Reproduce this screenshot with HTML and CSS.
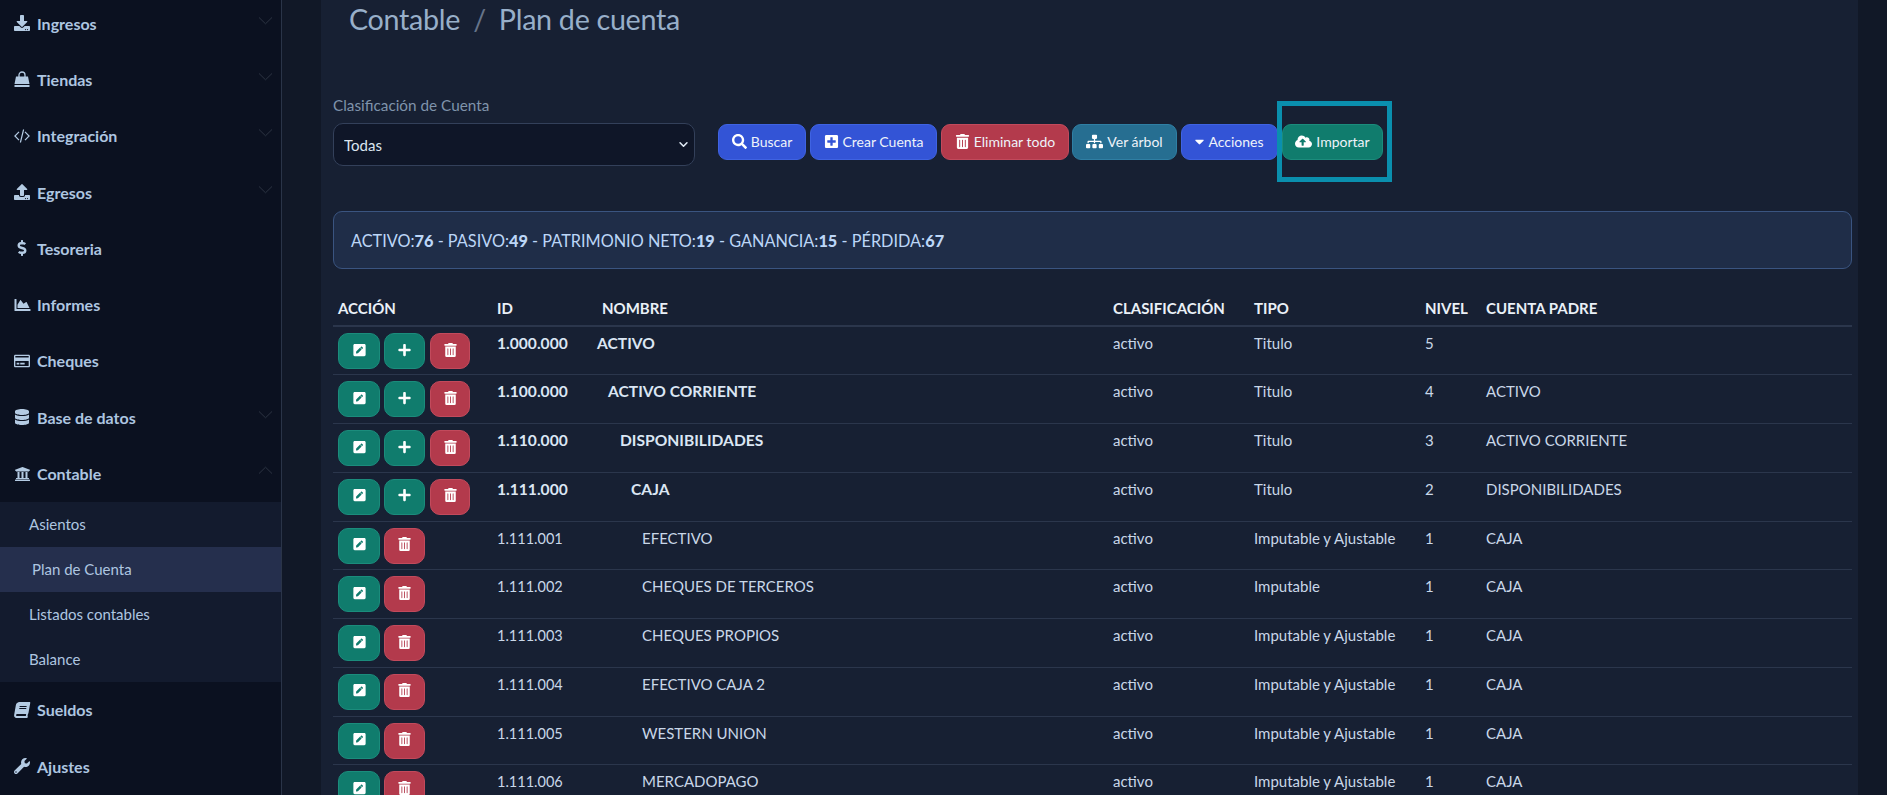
FILE: index.html
```html
<!DOCTYPE html>
<html lang="es">
<head>
    <meta charset="UTF-8">
    <meta name="viewport" content="width=device-width, initial-scale=1.0">
    <title>Contable - Plan de cuenta</title>
    <link rel="stylesheet" href="styles.css">
</head>
<body>
    <svg class="icon-defs" xmlns="http://www.w3.org/2000/svg">
        <symbol id="i-download" viewBox="0 0 512 512"><path d="M216 0h80c13.3 0 24 10.7 24 24v168h87.7c17.8 0 26.7 21.5 14.1 34.1L269.7 378.3c-7.5 7.5-19.8 7.5-27.3 0L90.1 226.1c-12.6-12.6-3.7-34.1 14.1-34.1H192V24c0-13.3 10.7-24 24-24zm296 376v112c0 13.3-10.7 24-24 24H24c-13.3 0-24-10.7-24-24V376c0-13.3 10.7-24 24-24h146.7l49 49c20.1 20.1 52.5 20.1 72.6 0l49-49H488c13.3 0 24 10.7 24 24zm-124 88c0-11-9-20-20-20s-20 9-20 20 9 20 20 20 20-9 20-20zm64 0c0-11-9-20-20-20s-20 9-20 20 9 20 20 20 20-9 20-20z"/></symbol>
        <symbol id="i-upload" viewBox="0 0 512 512"><path d="M296 384h-80c-13.3 0-24-10.7-24-24V192h-87.7c-17.8 0-26.7-21.5-14.1-34.1L242.3 5.7c7.5-7.5 19.8-7.5 27.3 0l152.2 152.2c12.6 12.6 3.7 34.1-14.1 34.1H320v168c0 13.3-10.7 24-24 24zm216-8v112c0 13.3-10.7 24-24 24H24c-13.3 0-24-10.7-24-24V376c0-13.3 10.7-24 24-24h136v8c0 30.9 25.1 56 56 56h80c30.9 0 56-25.1 56-56v-8h136c13.3 0 24 10.7 24 24zm-124 88c0-11-9-20-20-20s-20 9-20 20 9 20 20 20 20-9 20-20zm64 0c0-11-9-20-20-20s-20 9-20 20 9 20 20 20 20-9 20-20z"/></symbol>
        <symbol id="i-bag" viewBox="0 0 16 16"><path fill="none" stroke="currentColor" stroke-width="1.3" d="M5 7V4a3 3 0 0 1 6 0v3"/><path d="M2 5.5h12l1.5 7.5H.5zM.5 14h15v2H.5z"/></symbol>
        <symbol id="i-code" viewBox="0 0 16 16"><path fill="none" stroke="currentColor" stroke-width="1.2" d="M5 3.8.9 8 5 12.2M11 3.8 15.1 8 11 12.2M9.6 1.5 6.4 14.5"/></symbol>
        <symbol id="i-dollar" viewBox="0 0 288 512"><path d="M209.2 233.4l-108-31.6C88.7 198.2 80 186.5 80 173.5c0-16.3 13.2-29.5 29.5-29.5h66.3c12.2 0 24.2 3.7 34.2 10.5 6.1 4.1 14.3 3.1 19.5-2l34.8-34c7.1-6.9 6.1-18.4-1.8-24.5C238 74.8 207.4 64.1 176 64V16c0-8.8-7.2-16-16-16h-32c-8.8 0-16 7.2-16 16v48h-2.5C45.8 64-5.4 118.7.5 183.6c4.2 46.1 39.4 83.6 83.8 96.6l102.5 30c12.5 3.7 21.2 15.3 21.2 28.3 0 16.3-13.2 29.5-29.5 29.5h-66.3C100 368 88 364.3 78 357.5c-6.1-4.1-14.3-3.1-19.5 2l-34.8 34c-7.1 6.9-6.1 18.4 1.8 24.5 24.5 19.2 55.1 29.9 86.5 30v48c0 8.8 7.2 16 16 16h32c8.8 0 16-7.2 16-16v-48.2c46.6-.9 90.3-28.6 105.7-72.7 21.5-61.6-14.6-124.8-72.5-141.7z"/></symbol>
        <symbol id="i-chart" viewBox="0 0 512 512"><path d="M500 384c6.6 0 12 5.4 12 12v40c0 6.6-5.4 12-12 12H12c-6.6 0-12-5.4-12-12V76c0-6.6 5.4-12 12-12h40c6.6 0 12 5.4 12 12v308h436zM372.7 159.5L288 216l-85.3-113.7c-5.1-6.8-15.5-6.3-19.9 1L96 248v104h384l-89.9-187.8c-3.2-6.5-11.4-8.7-17.4-4.7z"/></symbol>
        <symbol id="i-card" viewBox="0 0 576 512"><path d="M527.9 32H48.1C21.5 32 0 53.5 0 80v352c0 26.5 21.5 48 48.1 48h479.8c26.6 0 48.1-21.5 48.1-48V80c0-26.5-21.5-48-48.1-48zM54.1 80h467.8c3.3 0 6 2.7 6 6v42H48.1v-42c0-3.3 2.7-6 6-6zm467.8 352H54.1c-3.3 0-6-2.7-6-6V256h479.8v170c0 3.3-2.7 6-6 6zM192 332v40c0 6.6-5.4 12-12 12h-72c-6.6 0-12-5.4-12-12v-40c0-6.6 5.4-12 12-12h72c6.6 0 12 5.4 12 12zm192 0v40c0 6.6-5.4 12-12 12H236c-6.6 0-12-5.4-12-12v-40c0-6.6 5.4-12 12-12h136c6.6 0 12 5.4 12 12z"/></symbol>
        <symbol id="i-database" viewBox="0 0 448 512"><path d="M448 73.143v45.714C448 159.143 347.667 192 224 192S0 159.143 0 118.857V73.143C0 32.857 100.333 0 224 0s224 32.857 224 73.143zM448 176v102.857C448 319.143 347.667 352 224 352S0 319.143 0 278.857V176c48.125 33.143 136.208 48.572 224 48.572S399.874 209.143 448 176zm0 160v102.857C448 479.143 347.667 512 224 512S0 479.143 0 438.857V336c48.125 33.143 136.208 48.572 224 48.572S399.874 369.143 448 336z"/></symbol>
        <symbol id="i-bank" viewBox="0 0 512 512"><path d="M496 128v16a8 8 0 0 1-8 8h-24v12c0 6.627-5.373 12-12 12H60c-6.627 0-12-5.373-12-12v-12H24a8 8 0 0 1-8-8v-16a8 8 0 0 1 4.941-7.392l232-88a7.996 7.996 0 0 1 6.118 0l232 88A8 8 0 0 1 496 128zm-24 304H40c-13.255 0-24 10.745-24 24v16a8 8 0 0 0 8 8h464a8 8 0 0 0 8-8v-16c0-13.255-10.745-24-24-24zM96 192v192H60c-6.627 0-12 5.373-12 12v20h416v-20c0-6.627-5.373-12-12-12h-36V192h-64v192h-64V192h-64v192h-64V192H96z"/></symbol>
        <symbol id="i-book" viewBox="0 0 448 512"><path d="M448 360V24c0-13.3-10.7-24-24-24H96C43 0 0 43 0 96v320c0 53 43 96 96 96h328c13.3 0 24-10.7 24-24v-16c0-7.5-3.5-14.3-8.9-18.7-4.2-15.4-4.2-59.3 0-74.7 5.4-4.3 8.9-11.1 8.9-18.6zM128 134c0-3.3 2.7-6 6-6h212c3.3 0 6 2.7 6 6v20c0 3.3-2.7 6-6 6H134c-3.3 0-6-2.7-6-6v-20zm0 64c0-3.3 2.7-6 6-6h212c3.3 0 6 2.7 6 6v20c0 3.3-2.7 6-6 6H134c-3.3 0-6-2.7-6-6v-20zm253.4 250H96c-17.7 0-32-14.3-32-32 0-17.6 14.4-32 32-32h285.4c-1.9 17.1-1.9 46.9 0 64z"/></symbol>
        <symbol id="i-wrench" viewBox="0 0 512 512"><path d="M507.73 109.1c-2.24-9.03-13.54-12.09-20.12-5.51l-74.36 74.36-67.88-11.31-11.31-67.88 74.36-74.36c6.62-6.62 3.43-17.9-5.66-20.16-47.38-11.74-99.55.91-136.58 37.93-39.64 39.64-50.55 97.1-34.05 147.2L18.74 402.76c-24.99 24.99-24.99 65.51 0 90.5 24.99 24.99 65.51 24.99 90.5 0l213.21-213.21c50.12 16.71 107.47 5.68 147.37-34.22 37.07-37.07 49.7-89.32 37.91-136.73zM64 472c-13.25 0-24-10.75-24-24 0-13.26 10.75-24 24-24s24 10.74 24 24c0 13.25-10.75 24-24 24z"/></symbol>
        <symbol id="i-chevron" viewBox="0 0 16 9"><path fill="none" stroke="currentColor" stroke-width="1" d="M1 1.2 8 8l7-6.8"/></symbol>
        <symbol id="i-search" viewBox="0 0 512 512"><path d="M505 442.7L405.3 343c-4.5-4.5-10.6-7-17-7H372c27.6-35.3 44-79.7 44-128C416 93.1 322.9 0 208 0S0 93.1 0 208s93.1 208 208 208c48.3 0 92.7-16.4 128-44v16.3c0 6.4 2.5 12.5 7 17l99.7 99.7c9.4 9.4 24.6 9.4 33.9 0l28.3-28.3c9.4-9.4 9.4-24.6.1-34zM208 336c-70.7 0-128-57.2-128-128 0-70.7 57.2-128 128-128 70.7 0 128 57.2 128 128 0 70.7-57.2 128-128 128z"/></symbol>
        <symbol id="i-plus-square" viewBox="0 0 448 512"><path d="M400 32H48C21.5 32 0 53.5 0 80v352c0 26.5 21.5 48 48 48h352c26.5 0 48-21.5 48-48V80c0-26.5-21.5-48-48-48zm-32 252c0 6.6-5.4 12-12 12h-92v92c0 6.6-5.4 12-12 12h-56c-6.6 0-12-5.4-12-12v-92H92c-6.6 0-12-5.4-12-12v-56c0-6.6 5.4-12 12-12h92v-92c0-6.6 5.4-12 12-12h56c6.6 0 12 5.4 12 12v92h92c6.6 0 12 5.4 12 12v56z"/></symbol>
        <symbol id="i-plus" viewBox="0 0 448 512"><path d="M416 208H272V64c0-17.67-14.33-32-32-32h-32c-17.67 0-32 14.33-32 32v144H32c-17.67 0-32 14.33-32 32v32c0 17.67 14.33 32 32 32h144v144c0 17.67 14.33 32 32 32h32c17.67 0 32-14.33 32-32V304h144c17.67 0 32-14.33 32-32v-32c0-17.67-14.33-32-32-32z"/></symbol>
        <symbol id="i-trash" viewBox="0 0 448 512"><path d="M32 464a48 48 0 0 0 48 48h288a48 48 0 0 0 48-48V128H32zm272-256a16 16 0 0 1 32 0v224a16 16 0 0 1-32 0zm-96 0a16 16 0 0 1 32 0v224a16 16 0 0 1-32 0zm-96 0a16 16 0 0 1 32 0v224a16 16 0 0 1-32 0zM432 32H312l-9.4-18.7A24 24 0 0 0 281.1 0H166.8a23.72 23.72 0 0 0-21.4 13.3L136 32H16A16 16 0 0 0 0 48v32a16 16 0 0 0 16 16h416a16 16 0 0 0 16-16V48a16 16 0 0 0-16-16z"/></symbol>
        <symbol id="i-edit" viewBox="0 0 448 512"><path d="M400 480H48c-26.5 0-48-21.5-48-48V80c0-26.5 21.5-48 48-48h352c26.5 0 48 21.5 48 48v352c0 26.5-21.5 48-48 48zM238.1 177.9L102.4 313.6l-6.3 57.1c-.8 7.6 5.6 14.1 13.3 13.3l57.1-6.3L302.2 242c2.3-2.3 2.3-6.1 0-8.5L246.7 178c-2.5-2.4-6.3-2.4-8.6-.1zM345 165.1L314.9 135c-9.4-9.4-24.6-9.4-33.9 0l-23.1 23.1c-2.3 2.3-2.3 6.1 0 8.5l55.5 55.5c2.3 2.3 6.1 2.3 8.5 0L345 199c9.3-9.3 9.3-24.5 0-33.9z"/></symbol>
        <symbol id="i-sitemap" viewBox="0 0 640 512"><path d="M128 352H32c-17.67 0-32 14.33-32 32v96c0 17.67 14.33 32 32 32h96c17.67 0 32-14.33 32-32v-96c0-17.67-14.33-32-32-32zm-24-80h192v48h48v-48h192v48h48v-57.59c0-21.17-17.23-38.41-38.41-38.41H344v-64h40c17.67 0 32-14.33 32-32V32c0-17.67-14.33-32-32-32H256c-17.67 0-32 14.33-32 32v96c0 17.67 14.33 32 32 32h40v64H94.41C73.23 224 56 241.23 56 262.41V320h48v-48zm264 80h-96c-17.67 0-32 14.33-32 32v96c0 17.67 14.33 32 32 32h96c17.67 0 32-14.33 32-32v-96c0-17.67-14.33-32-32-32zm240 0h-96c-17.67 0-32 14.33-32 32v96c0 17.67 14.33 32 32 32h96c17.67 0 32-14.33 32-32v-96c0-17.67-14.33-32-32-32z"/></symbol>
        <symbol id="i-caret" viewBox="0 0 320 512"><path d="M31.3 192h257.3c17.8 0 26.7 21.5 14.1 34.1L174.1 354.8c-7.8 7.8-20.5 7.8-28.3 0L17.2 226.1C4.6 213.5 13.5 192 31.3 192z"/></symbol>
        <symbol id="i-cloud" viewBox="0 0 640 512"><path d="M537.6 226.6c4.1-10.7 6.4-22.4 6.4-34.6 0-53-43-96-96-96-19.7 0-38.1 6-53.3 16.2C367 64.2 315.3 32 256 32c-88.4 0-160 71.6-160 160 0 2.7.1 5.4.2 8.1C40.2 219.8 0 273.2 0 336c0 79.5 64.5 144 144 144h368c70.7 0 128-57.3 128-128 0-61.9-44-113.6-102.4-125.4zM393.4 288H328v112c0 8.8-7.2 16-16 16h-48c-8.8 0-16-7.2-16-16V288h-65.4c-14.3 0-21.4-17.2-11.3-27.3l105.4-105.4c6.2-6.2 16.4-6.2 22.6 0l105.4 105.4c10.1 10.1 2.9 27.3-11.3 27.3z"/></symbol>
    </svg>

    <aside class="sidebar">
        <nav class="nav">
            <a class="nav-link"><svg class="nav-icon"><use href="#i-download"/></svg><span>Ingresos</span><svg class="chevron"><use href="#i-chevron"/></svg></a>
            <a class="nav-link"><svg class="nav-icon"><use href="#i-bag"/></svg><span>Tiendas</span><svg class="chevron"><use href="#i-chevron"/></svg></a>
            <a class="nav-link"><svg class="nav-icon"><use href="#i-code"/></svg><span>Integración</span><svg class="chevron"><use href="#i-chevron"/></svg></a>
            <a class="nav-link"><svg class="nav-icon"><use href="#i-upload"/></svg><span>Egresos</span><svg class="chevron"><use href="#i-chevron"/></svg></a>
            <a class="nav-link"><svg class="nav-icon"><use href="#i-dollar"/></svg><span>Tesoreria</span></a>
            <a class="nav-link"><svg class="nav-icon nav-icon-wide"><use href="#i-chart"/></svg><span>Informes</span></a>
            <a class="nav-link"><svg class="nav-icon"><use href="#i-card"/></svg><span>Cheques</span></a>
            <a class="nav-link"><svg class="nav-icon"><use href="#i-database"/></svg><span>Base de datos</span><svg class="chevron"><use href="#i-chevron"/></svg></a>
            <a class="nav-link"><svg class="nav-icon nav-icon-wide"><use href="#i-bank"/></svg><span>Contable</span><svg class="chevron chevron-up"><use href="#i-chevron"/></svg></a>
            <div class="subnav">
                <a class="sub-link">Asientos</a>
                <a class="sub-link sub-link-active">Plan de Cuenta</a>
                <a class="sub-link">Listados contables</a>
                <a class="sub-link">Balance</a>
            </div>
            <a class="nav-link"><svg class="nav-icon nav-icon-slant"><use href="#i-book"/></svg><span>Sueldos</span></a>
            <a class="nav-link"><svg class="nav-icon"><use href="#i-wrench"/></svg><span>Ajustes</span></a>
        </nav>
    </aside>

    <main class="main">
        <div class="card">
            <h1 class="page-title">Contable <span class="slash">/</span> Plan de cuenta</h1>

            <div class="filters">
                <div class="filter-field">
                    <label class="filter-label" for="clasificacion">Clasificación de Cuenta</label>
                    <select class="filter-select" id="clasificacion">
                        <option>Todas</option>
                    </select>
                </div>
                <div class="filter-actions">
                    <button class="btn btn-blue btn-buscar"><svg class="btn-icon"><use href="#i-search"/></svg>Buscar</button>
                    <button class="btn btn-blue btn-crear"><svg class="btn-icon"><use href="#i-plus-square"/></svg>Crear Cuenta</button>
                    <button class="btn btn-red btn-eliminar"><svg class="btn-icon"><use href="#i-trash"/></svg>Eliminar todo</button>
                    <button class="btn btn-steel btn-arbol"><svg class="btn-icon btn-icon-wide"><use href="#i-sitemap"/></svg>Ver árbol</button>
                    <button class="btn btn-blue btn-acciones"><svg class="btn-icon btn-icon-caret"><use href="#i-caret"/></svg>Acciones</button>
                    <span class="highlight">
                        <button class="btn btn-green btn-importar"><svg class="btn-icon btn-icon-wide"><use href="#i-cloud"/></svg>Importar</button>
                    </span>
                </div>
            </div>

            <div class="summary">ACTIVO:<b>76</b> - PASIVO:<b>49</b> - PATRIMONIO NETO:<b>19</b> - GANANCIA:<b>15</b> - PÉRDIDA:<b>67</b></div>

            <table class="accounts">
                <colgroup>
                    <col class="col-accion"><col class="col-id"><col class="col-nombre"><col class="col-clasif"><col class="col-tipo"><col class="col-nivel"><col class="col-padre">
                </colgroup>
                <thead>
                    <tr><th>ACCIÓN</th><th>ID</th><th class="th-nombre">NOMBRE</th><th>CLASIFICACIÓN</th><th>TIPO</th><th>NIVEL</th><th>CUENTA PADRE</th></tr>
                </thead>
                <tbody>
                    <tr class="row-title">
                        <td><div class="row-btns"><button class="act act-edit"><svg><use href="#i-edit"/></svg></button><button class="act act-add"><svg><use href="#i-plus"/></svg></button><button class="act act-del act-del-third"><svg><use href="#i-trash"/></svg></button></div></td>
                        <td>1.000.000</td><td class="lvl-5">ACTIVO</td><td>activo</td><td>Titulo</td><td>5</td><td></td>
                    </tr>
                    <tr class="row-title">
                        <td><div class="row-btns"><button class="act act-edit"><svg><use href="#i-edit"/></svg></button><button class="act act-add"><svg><use href="#i-plus"/></svg></button><button class="act act-del act-del-third"><svg><use href="#i-trash"/></svg></button></div></td>
                        <td>1.100.000</td><td class="lvl-4">ACTIVO CORRIENTE</td><td>activo</td><td>Titulo</td><td>4</td><td>ACTIVO</td>
                    </tr>
                    <tr class="row-title">
                        <td><div class="row-btns"><button class="act act-edit"><svg><use href="#i-edit"/></svg></button><button class="act act-add"><svg><use href="#i-plus"/></svg></button><button class="act act-del act-del-third"><svg><use href="#i-trash"/></svg></button></div></td>
                        <td>1.110.000</td><td class="lvl-3">DISPONIBILIDADES</td><td>activo</td><td>Titulo</td><td>3</td><td>ACTIVO CORRIENTE</td>
                    </tr>
                    <tr class="row-title">
                        <td><div class="row-btns"><button class="act act-edit"><svg><use href="#i-edit"/></svg></button><button class="act act-add"><svg><use href="#i-plus"/></svg></button><button class="act act-del act-del-third"><svg><use href="#i-trash"/></svg></button></div></td>
                        <td>1.111.000</td><td class="lvl-2">CAJA</td><td>activo</td><td>Titulo</td><td>2</td><td>DISPONIBILIDADES</td>
                    </tr>
                    <tr>
                        <td><div class="row-btns"><button class="act act-edit"><svg><use href="#i-edit"/></svg></button><button class="act act-del"><svg><use href="#i-trash"/></svg></button></div></td>
                        <td>1.111.001</td><td class="lvl-1">EFECTIVO</td><td>activo</td><td>Imputable y Ajustable</td><td>1</td><td>CAJA</td>
                    </tr>
                    <tr>
                        <td><div class="row-btns"><button class="act act-edit"><svg><use href="#i-edit"/></svg></button><button class="act act-del"><svg><use href="#i-trash"/></svg></button></div></td>
                        <td>1.111.002</td><td class="lvl-1">CHEQUES DE TERCEROS</td><td>activo</td><td>Imputable</td><td>1</td><td>CAJA</td>
                    </tr>
                    <tr>
                        <td><div class="row-btns"><button class="act act-edit"><svg><use href="#i-edit"/></svg></button><button class="act act-del"><svg><use href="#i-trash"/></svg></button></div></td>
                        <td>1.111.003</td><td class="lvl-1">CHEQUES PROPIOS</td><td>activo</td><td>Imputable y Ajustable</td><td>1</td><td>CAJA</td>
                    </tr>
                    <tr>
                        <td><div class="row-btns"><button class="act act-edit"><svg><use href="#i-edit"/></svg></button><button class="act act-del"><svg><use href="#i-trash"/></svg></button></div></td>
                        <td>1.111.004</td><td class="lvl-1">EFECTIVO CAJA 2</td><td>activo</td><td>Imputable y Ajustable</td><td>1</td><td>CAJA</td>
                    </tr>
                    <tr>
                        <td><div class="row-btns"><button class="act act-edit"><svg><use href="#i-edit"/></svg></button><button class="act act-del"><svg><use href="#i-trash"/></svg></button></div></td>
                        <td>1.111.005</td><td class="lvl-1">WESTERN UNION</td><td>activo</td><td>Imputable y Ajustable</td><td>1</td><td>CAJA</td>
                    </tr>
                    <tr>
                        <td><div class="row-btns"><button class="act act-edit"><svg><use href="#i-edit"/></svg></button><button class="act act-del"><svg><use href="#i-trash"/></svg></button></div></td>
                        <td>1.111.006</td><td class="lvl-1">MERCADOPAGO</td><td>activo</td><td>Imputable y Ajustable</td><td>1</td><td>CAJA</td>
                    </tr>
                </tbody>
            </table>
        </div>
    </main>
</body>
</html>
```

FILE: styles.css
```css
* {
    box-sizing: border-box;
}
html, body {
    height: 100%;
    margin: 0;
    overflow: hidden;
}
body {
    display: flex;
    font-family: Lato, "Noto Sans", sans-serif;
    font-size: 15px;
    background-color: #111827;
    color: #c9d7e8;
}
.icon-defs {
    display: none;
}

/* Menu lateral */
.sidebar {
    width: 282px;
    flex: none;
    background-color: #0b1120;
    border-right: 1px solid #2a3448;
    color: #aec6e0;
}
.nav {
    margin-top: -5px;
}
.nav-link {
    display: flex;
    align-items: center;
    height: 56.3px;
    padding-left: 14px;
    font-weight: 700;
    font-size: 16px;
}
.nav-link span {
    margin-left: 7px;
}
.nav-icon {
    width: 16px;
    height: 16px;
    fill: currentColor;
    color: #b4cbe3;
}
.nav-icon-wide {
    width: 19px;
    margin: 0 -2px 0 -1px;
}
.nav-icon-slant {
    transform: skewX(-10deg);
}
.chevron {
    width: 15px;
    height: 9px;
    margin-left: auto;
    margin-right: 8px;
    margin-top: -6px;
    color: #2f3644;
}
.chevron-up {
    transform: rotate(180deg);
}
.subnav {
    background-color: #131b2e;
}
.sub-link {
    display: flex;
    align-items: center;
    height: 45px;
    padding-left: 29px;
    font-size: 15px;
}
.sub-link-active {
    background-color: #252f4d;
    padding-left: 32px;
}

/* Contenido */
.main {
    flex: 1;
    min-width: 0;
    padding: 0 29px 0 39px;
}
.card {
    height: 100%;
    padding: 0 6px 0 12px;
    background-color: #172033;
}
.page-title {
    margin: 0 0 0 16px;
    font-size: 28.7px;
    line-height: 38px;
    font-weight: 400;
    letter-spacing: -0.3px;
    color: #98afc9;
}
.slash {
    margin: 0 6px;
    color: #66748a;
}
.filters {
    display: flex;
    margin-top: 56px;
    height: 117px;
}
.filter-field {
    width: 362px;
    flex: none;
}
.filter-label {
    display: block;
    height: 29px;
    line-height: 22px;
    font-size: 15.3px;
    color: #7f93ab;
}
.filter-select {
    display: block;
    width: 100%;
    height: 43px;
    padding: 0 10px;
    appearance: none;
    border: 1px solid #33405a;
    border-radius: 10px;
    font-family: inherit;
    font-size: 15px;
    color: #dbe5f0;
    background-color: #0f1628;
    background-image: url("data:image/svg+xml,%3Csvg xmlns='http://www.w3.org/2000/svg' viewBox='0 0 16 16'%3E%3Cpath fill='none' stroke='%23dbe5f0' stroke-width='2.4' stroke-linecap='round' stroke-linejoin='round' d='M3 5.5l5 5 5-5'/%3E%3C/svg%3E");
    background-repeat: no-repeat;
    background-position: right 5px center;
    background-size: 11px 11px;
}
.filter-actions {
    display: flex;
    align-items: flex-start;
    margin: 30px 0 0 23px;
}
.btn {
    display: flex;
    align-items: center;
    justify-content: center;
    height: 36px;
    margin-right: 4px;
    padding: 0 0 2px;
    border-radius: 9px;
    border: 1px solid;
    font-family: inherit;
    font-size: 14px;
    color: #eef3fa;
}
.btn-blue {
    background-color: #3354d6;
    border-color: #3f63e2;
}
.btn-red {
    background-color: #b33a4c;
    border-color: #c24a5c;
}
.btn-steel {
    background-color: #266e91;
    border-color: #2f7fa4;
}
.btn-green {
    background-color: #107c6d;
    border-color: #1b8c7c;
}
.btn-buscar { width: 88px; }
.btn-crear { width: 127px; }
.btn-eliminar { width: 128px; margin-right: 3px; }
.btn-arbol { width: 105px; }
.btn-acciones { width: 97px; }
.btn-importar { width: 101px; margin-right: 0; }
.btn-icon {
    width: 15px;
    height: 15px;
    margin-right: 4px;
    fill: currentColor;
    color: #fff;
}
.btn-icon-wide {
    width: 17px;
}
.btn-icon-caret {
    width: 9px;
}
.highlight {
    position: relative;
    display: block;
}
.highlight::after {
    content: "";
    position: absolute;
    top: -23px;
    right: -9px;
    bottom: -22px;
    left: -5px;
    border: 5px solid #0a8fae;
    pointer-events: none;
}
.summary {
    height: 58px;
    display: flex;
    align-items: center;
    padding-left: 17px;
    white-space: pre-wrap;
    border: 1px solid #3a5480;
    border-radius: 9px;
    background-color: #1f2d48;
    color: #bcd6f7;
    font-size: 16.3px;
}
.summary b {
    font-weight: 900;
}

/* Tabla */
.accounts {
    width: 1519px;
    margin-top: 17px;
    table-layout: fixed;
    border-collapse: collapse;
}
.col-accion { width: 159px; }
.col-id { width: 100px; }
.col-nombre { width: 516px; }
.col-clasif { width: 141px; }
.col-tipo { width: 171px; }
.col-nivel { width: 61px; }
.col-padre { width: 371px; }
.accounts th {
    height: 40px;
    padding: 5px 5px 0;
    text-align: left;
    font-size: 15px;
    font-weight: 700;
    color: #eaf0f7;
    border-bottom: 2px solid #2b364c;
}
.accounts th.th-nombre {
    padding-left: 10px;
}
.accounts td {
    height: 48.75px;
    padding: 5px 5px 0;
    vertical-align: top;
    line-height: 22px;
    font-size: 15px;
    border-bottom: 1px solid #2b364c;
    white-space: nowrap;
}
.accounts td:first-child {
    padding-top: 6px;
}
.accounts td:nth-child(2) {
    padding-top: 6px;
    font-size: 14.5px;
}
.accounts .row-title td:nth-child(2),
.accounts .row-title td:nth-child(3) {
    padding-top: 5px;
    font-size: 15.6px;
    font-weight: 700;
    color: #dbe6f3;
}
.accounts td.lvl-5 { padding-left: 5px; }
.accounts td.lvl-4 { padding-left: 16px; }
.accounts td.lvl-3 { padding-left: 28px; }
.accounts td.lvl-2 { padding-left: 39px; }
.accounts td.lvl-1 { padding-left: 50px; }
.row-btns {
    display: flex;
    gap: 4px;
}
.act {
    display: flex;
    align-items: center;
    justify-content: center;
    width: 42px;
    height: 36px;
    padding: 0 0 3px;
    border: 1px solid;
    border-radius: 10px;
    color: #fff;
}
.act svg {
    width: 13px;
    height: 14px;
    fill: currentColor;
}
.act-edit,
.act-add {
    background-color: #107c6d;
    border-color: #1b8c7c;
}
.act-add {
    width: 41px;
}
.act-del {
    width: 41px;
    background-color: #b33a4c;
    border-color: #c24a5c;
}
.act-del-third {
    width: 40px;
    margin-left: 1px;
}
```
